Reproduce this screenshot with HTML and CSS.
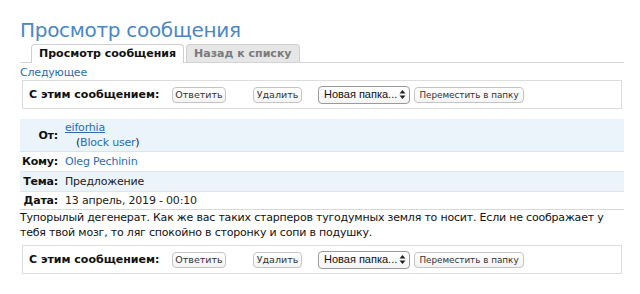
FILE: index.html
```html
<!DOCTYPE html>
<html lang="ru">
<head>
    <meta charset="UTF-8">
    <title>Просмотр сообщения</title>
    <link rel="stylesheet" href="styles.css">
</head>
<body>
    <div class="page">
        <h1 class="page-title">Просмотр сообщения</h1>

        <ul class="tabs">
            <li class="tab active">Просмотр сообщения</li>
            <li class="tab">Назад к списку</li>
        </ul>

        <a href="#" class="next-link">Следующее</a>

        <div class="actions">
            <span class="actions-label">С этим сообщением:</span>
            <button type="button" class="btn btn-reply">Ответить</button>
            <button type="button" class="btn btn-delete">Удалить</button>
            <span class="folder-select">
                <span class="folder-text">Новая папка...</span>
                <svg width="7" height="11" viewBox="0 0 7 11"><path d="M3.5 1 L6.5 4.5 H0.5 Z M3.5 10 L6.5 6.5 H0.5 Z" fill="#222"/></svg>
            </span>
            <button type="button" class="btn btn-move">Переместить в папку</button>
        </div>

        <div class="info">
            <div class="info-row odd from-row">
                <div class="info-label">От:</div>
                <div class="info-value">
                    <a href="#" class="user-link">eiforhia</a>
                    <span class="block-user">(<a href="#">Block user</a>)</span>
                </div>
            </div>
            <div class="info-row">
                <div class="info-label">Кому:</div>
                <div class="info-value"><a href="#">Oleg Pechinin</a></div>
            </div>
            <div class="info-row odd">
                <div class="info-label">Тема:</div>
                <div class="info-value">Предложение</div>
            </div>
            <div class="info-row last">
                <div class="info-label">Дата:</div>
                <div class="info-value">13 апрель, 2019 - 00:10</div>
            </div>
        </div>

        <p class="message-body">Тупорылый дегенерат. Как же вас таких старперов тугодумных земля то носит. Если не соображает у тебя твой мозг, то ляг спокойно в сторонку и сопи в подушку.</p>

        <div class="actions">
            <span class="actions-label">С этим сообщением:</span>
            <button type="button" class="btn btn-reply">Ответить</button>
            <button type="button" class="btn btn-delete">Удалить</button>
            <span class="folder-select">
                <span class="folder-text">Новая папка...</span>
                <svg width="7" height="11" viewBox="0 0 7 11"><path d="M3.5 1 L6.5 4.5 H0.5 Z M3.5 10 L6.5 6.5 H0.5 Z" fill="#222"/></svg>
            </span>
            <button type="button" class="btn btn-move">Переместить в папку</button>
        </div>
    </div>
</body>
</html>
```

FILE: styles.css
```css
body {
    margin: 0;
    font-family: "DejaVu Sans", Verdana, sans-serif;
    font-size: 11px;
    line-height: 15px;
    letter-spacing: -0.2px;
    color: #222;
    background-color: #fff;
}

a {
    color: #2a6db6;
    text-decoration: none;
}

.page {
    width: 604px;
    padding-left: 20px;
}

.page-title {
    margin: 17px 0 0 0;
    font-size: 20px;
    line-height: 26px;
    letter-spacing: -0.3px;
    font-weight: normal;
    color: #4a87c7;
}

.tabs {
    display: flex;
    list-style: none;
    margin: 1px 0 0 0;
    padding: 0 0 0 11px;
    border-bottom: 1px solid #d4d4d4;
}

.tab {
    margin-right: 2px;
    padding: 1px 7px 1px 7px;
    border: 1px solid #cfcfcf;
    border-bottom: none;
    border-radius: 4px 4px 0 0;
    background-color: #e6e6e6;
    color: #7a7a7a;
    font-weight: bold;
    letter-spacing: 0;
}

.tab.active {
    background-color: #fff;
    color: #111;
    margin-bottom: -1px;
    padding-bottom: 2px;
}

.next-link {
    display: block;
    margin-top: 2px;
}

.actions {
    display: flex;
    align-items: center;
    margin-left: 2px;
    width: 592px;
    height: 27px;
    padding-left: 6px;
    border: 1px solid #dcdcdc;
}

.actions-label {
    flex: none;
    width: 143px;
    font-weight: bold;
    color: #111;
    white-space: nowrap;
    letter-spacing: 0;
}

.btn {
    flex: none;
    box-sizing: border-box;
    font-family: "DejaVu Sans", Verdana, sans-serif;
    font-size: 9.5px;
    line-height: 12px;
    letter-spacing: 0;
    color: #333;
    background: linear-gradient(#fff, #f3f3f3);
    border: 1px solid #c4c4c4;
    border-radius: 4px;
    padding: 0;
    height: 16px;
    text-align: center;
}

.btn-reply {
    width: 54px;
    margin-right: 27px;
}

.btn-delete {
    width: 49px;
    margin-right: 16px;
}

.btn-move {
    width: 110px;
    font-size: 8.8px;
}

.folder-select {
    flex: none;
    box-sizing: border-box;
    display: flex;
    align-items: center;
    justify-content: space-between;
    width: 92px;
    height: 18px;
    padding: 0 3px 0 5px;
    border: 1px solid #9a9a9a;
    border-radius: 4px;
    font-family: "Liberation Sans", Arial, sans-serif;
    font-size: 11px;
    letter-spacing: 0;
    color: #111;
    background: linear-gradient(#fff, #f4f4f4);
    margin-right: 4px;
}

.folder-text {
    white-space: nowrap;
}

.info {
    margin-top: 10px;
}

.info-row {
    display: flex;
    align-items: center;
    height: 19px;
    border-bottom: 1px solid #dfe5ea;
}

.info-row.odd {
    background-color: #ecf4fb;
}

.info-row.from-row {
    height: 32px;
    border-bottom-color: #d4e6f4;
}

.info-row.last {
    height: 17px;
    border-bottom-color: #d8d8d8;
}

.info-label {
    width: 38px;
    padding-right: 3px;
    text-align: right;
    font-weight: bold;
    color: #111;
}

.info-value {
    padding-left: 4px;
}

.user-link {
    display: block;
    text-decoration: underline;
}

.block-user {
    display: block;
    padding-left: 11px;
}

.message-body {
    margin: 0;
    color: #111;
}

.message-body + .actions {
    margin-top: 5px;
}
```
